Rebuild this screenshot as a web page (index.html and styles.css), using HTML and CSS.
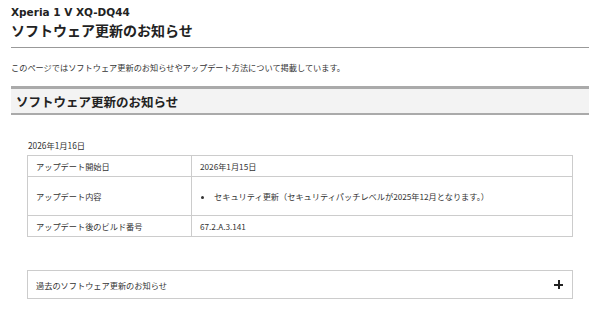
FILE: index.html
```html
<!DOCTYPE html>
<html lang="ja">
<head>
<meta charset="utf-8">
<link rel="stylesheet" href="styles.css">
</head>
<body>
<div class="page">
  <div class="model">Xperia 1 V XQ-DQ44</div>
  <h1 class="title">ソフトウェア更新のお知らせ</h1>
  <p class="intro">このページではソフトウェア更新のお知らせやアップデート方法について掲載しています。</p>
  <h2 class="section">ソフトウェア更新のお知らせ</h2>
  <div class="content">
    <div class="date">2026年1月16日</div>
    <table class="info">
      <tr class="r1"><th>アップデート開始日</th><td>2026年1月15日</td></tr>
      <tr class="r2"><th>アップデート内容</th><td><ul><li>セキュリティ更新（セキュリティパッチレベルが2025年12月となります。）</li></ul></td></tr>
      <tr class="r3"><th>アップデート後のビルド番号</th><td>67.2.A.3.141</td></tr>
    </table>
    <div class="accordion">
      <span>過去のソフトウェア更新のお知らせ</span>
      <span class="plus"></span>
    </div>
  </div>
</div>
</body>
</html>
```
FILE: styles.css
```css
html, body {
  margin: 0;
  padding: 0;
  background: #fff;
}
body {
  font-family: "Noto Sans CJK JP", "Noto Sans", sans-serif;
  color: #333;
}
.page {
  padding: 5px 11px 0 11px;
}
.model {
  font-family: "DejaVu Sans", "Noto Sans CJK JP", sans-serif;
  font-weight: bold;
  font-size: 10.5px;
  line-height: 14px;
  color: #222;
}
.title {
  margin: 0;
  font-size: 14px;
  line-height: 22px;
  font-weight: bold;
  color: #222;
  padding-bottom: 6px;
  border-bottom: 1px solid #999;
}
.intro {
  margin: 13px 0 0 0;
  font-size: 8.2px;
  line-height: 12px;
  color: #333;
}
.section {
  margin: 13px 0 0 0;
  background: #f3f3f3;
  border-top: 3px solid #aaa;
  border-bottom: 2px solid #aaa;
  font-size: 12.5px;
  line-height: 22px;
  padding: 2px 5px 0 5px;
  font-weight: bold;
  color: #222;
}
.content {
  padding: 0 16px 0 16px;
}
.date {
  margin-top: 24px;
  font-size: 8.3px;
  line-height: 12px;
  padding-left: 1px;
}
.info {
  margin-top: 4px;
  width: 100%;
  border-collapse: collapse;
  font-size: 8.2px;
  color: #333;
}
.info th, .info td {
  border: 1px solid #ccc;
  text-align: left;
  font-weight: normal;
  padding: 0 8px;
  vertical-align: middle;
}
.info th {
  width: 147px;
}
.r1 th, .r1 td, .r3 th, .r3 td {
  height: 20px;
}
.r2 th, .r2 td {
  height: 38px;
}
.info ul {
  margin: 0;
  padding: 0 0 0 14px;
}
.info li {
  line-height: 12px;
}
.accordion {
  margin-top: 33px;
  border: 1px solid #ccc;
  height: 27px;
  display: flex;
  align-items: center;
  justify-content: space-between;
  padding: 0 8px;
  font-size: 8.2px;
  color: #333;
}
.plus {
  position: relative;
  width: 9px;
  height: 9px;
  margin-right: 1px;
}
.plus::before, .plus::after {
  content: "";
  position: absolute;
  background: #222;
}
.plus::before {
  left: 0;
  top: 4px;
  width: 9px;
  height: 1.5px;
}
.plus::after {
  left: 4px;
  top: 0;
  width: 1.5px;
  height: 9px;
}
```
